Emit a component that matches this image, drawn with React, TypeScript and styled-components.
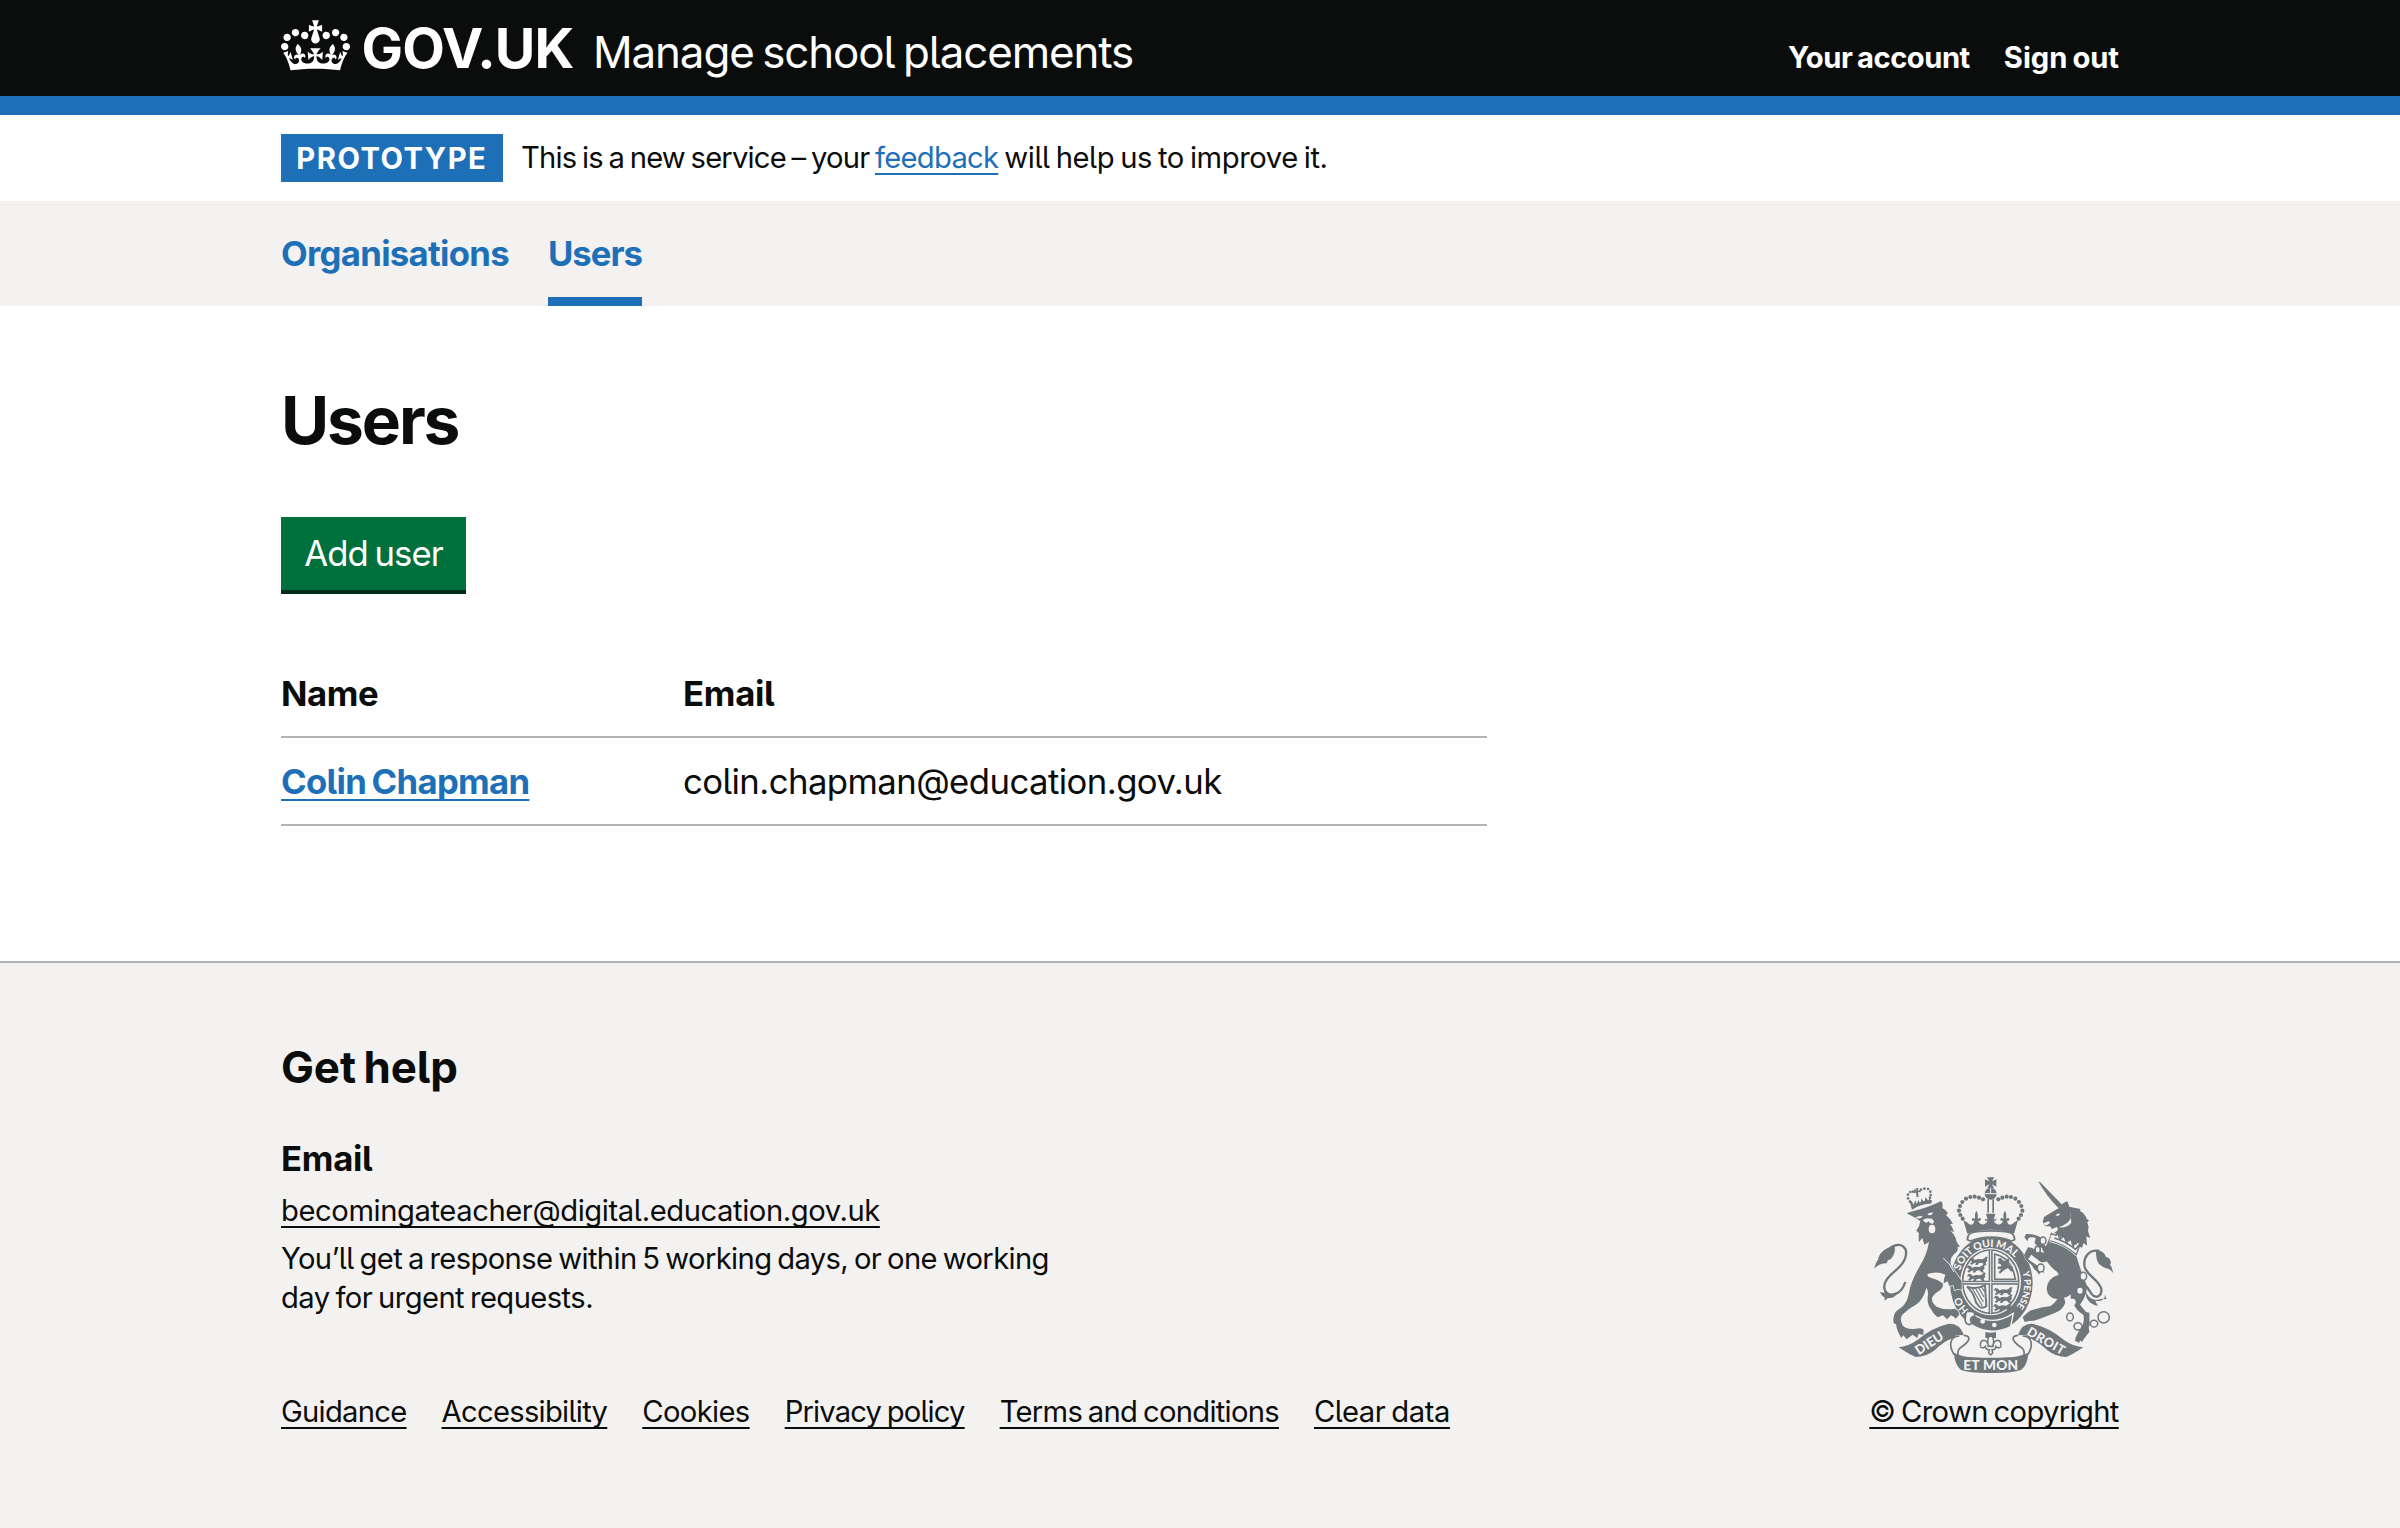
import React from "react";
import styled, { createGlobalStyle, css } from "styled-components";

const colour = {
  black: "#0b0c0c",
  white: "#ffffff",
  blue: "#1d70b8",
  green: "#00703c",
  greenShadow: "#002d18",
  grey: "#f3f2f1",
  border: "#b1b4b6",
  arms: "#6f777b",
};

const GlobalStyle = createGlobalStyle`
  *, *::before, *::after { box-sizing: border-box; word-spacing: -0.06em; }
  body {
    margin: 0;
    background: ${colour.white};
    color: ${colour.black};
    font-family: Inter, "Liberation Sans", sans-serif;
    font-feature-settings: "cv05";
    -webkit-font-smoothing: antialiased;
  }
`;

const smallText = css`
  font-size: 29.2px;
  line-height: 38.3px;
`;

const bodyText = css`
  font-size: 34.7px;
  line-height: 47.9px;
`;

const Page = styled.div`
  min-height: 1528px;
  display: flex;
  flex-direction: column;
`;

const Container = styled.div`
  width: 1838px;
  margin: 0 auto;
`;

const Tracked = styled.span<{ $ls: number }>`
  letter-spacing: ${(p) => p.$ls}px;
  white-space: nowrap;
`;

/* Header */

const Header = styled.header`
  height: 115px;
  background: ${colour.black};
  border-bottom: 19px solid ${colour.blue};
  color: ${colour.white};
`;

const HeaderRow = styled(Container)`
  display: flex;
  align-items: flex-start;
`;

const Crown = styled.svg`
  width: 69px;
  height: 51px;
  margin-top: 20px;
`;

const LogoText = styled.span`
  margin: 28px 0 0 11.5px;
  width: 217px;
  font-size: 55.4px;
  line-height: 40px;
  font-weight: 700;
  letter-spacing: -0.8px;
`;

const ServiceName = styled.span`
  margin: 29px 0 0 14.5px;
  font-size: 43.9px;
  line-height: 46px;
`;

const AccountNav = styled.nav`
  display: flex;
  gap: 34px;
  margin: 38.6px 0 0 auto;
  font-weight: 700;
  ${smallText}
`;

/* Phase banner */

const PhaseBanner = styled(Container)`
  display: flex;
  align-items: center;
  gap: 18px;
  height: 86px;
  ${smallText}
`;

const PhaseText = styled.span`
  padding-top: 1px;
  white-space: nowrap;
`;

const Tag = styled.strong`
  width: 222px;
  height: 48px;
  padding: 2px 0 0 15.3px;
  background: ${colour.blue};
  color: ${colour.white};
  line-height: 46px;
  letter-spacing: 1.5px;
`;

const Link = styled.a<{ $ls: number; $tone?: "blue" | "black"; $bold?: boolean }>`
  color: ${(p) => (p.$tone === "blue" ? colour.blue : colour.black)};
  font-weight: ${(p) => (p.$bold ? 700 : 400)};
  letter-spacing: ${(p) => p.$ls}px;
  white-space: nowrap;
  text-decoration: underline;
  text-decoration-thickness: 2px;
  text-underline-offset: 5px;
  text-decoration-skip-ink: none;
`;

/* Primary navigation */

const PrimaryNav = styled.nav`
  height: 105px;
  background: ${colour.grey};
`;

const NavList = styled(Container)`
  display: flex;
  gap: 39px;
`;

const NavItem = styled.a<{ $active?: boolean; $ls: number }>`
  ${bodyText}
  height: 105px;
  padding-top: 28.8px;
  color: ${colour.blue};
  font-weight: 700;
  letter-spacing: ${(p) => p.$ls}px;
  border-bottom: ${(p) => (p.$active ? `9px solid ${colour.blue}` : "0")};
`;

/* Main */

const Main = styled(Container)`
  height: 655px;
  padding-top: 76px;
`;

const Title = styled.h1`
  margin: 0 0 58.4px;
  font-size: 65.8px;
  line-height: 76.6px;
  font-weight: 700;
  letter-spacing: -2.1px;
`;

const Button = styled.button`
  ${bodyText}
  display: block;
  width: 185px;
  height: 72.6px;
  padding: 1px 0 0;
  border: 0;
  background: ${colour.green};
  box-shadow: 0 4px 0 ${colour.greenShadow};
  color: ${colour.white};
  font-family: inherit;
  font-feature-settings: inherit;
  letter-spacing: -0.93px;
`;

const Table = styled.div`
  width: 1206px;
  margin-top: 60.6px;
`;

const Row = styled.div<{ $head?: boolean }>`
  ${bodyText}
  display: grid;
  grid-template-columns: 402px 1fr;
  padding: 19.6px 0 18.6px;
  border-bottom: 2px solid ${colour.border};
  font-weight: ${(p) => (p.$head ? 700 : 400)};
`;

/* Footer */

const Footer = styled.footer`
  flex: 1;
  padding-top: 76.2px;
  border-top: 2px solid ${colour.border};
  background: ${colour.grey};
`;

const FooterRow = styled(Container)`
  display: flex;
  justify-content: space-between;
  align-items: flex-end;
`;

const FooterMain = styled.div`
  ${smallText}
`;

const HelpTitle = styled.h2`
  margin: 0 0 38.3px;
  font-size: 43.9px;
  line-height: 57.4px;
  font-weight: 700;
  letter-spacing: -0.1px;
`;

const HelpSubtitle = styled.h3`
  ${bodyText}
  margin: 0;
  font-weight: 700;
`;

const HelpText = styled.p`
  margin: 9.6px 0 0;
`;

const FooterLinks = styled.div`
  display: flex;
  gap: 35px;
  margin-top: 76.4px;
`;

const Copyright = styled.div`
  ${smallText}
  width: 250px;
  display: flex;
  flex-direction: column;
  align-items: center;
  gap: 19px;
`;

const ArmsSvg = styled.svg`
  width: 240px;
  height: 197px;
`;

const ArmsText = styled.text`
  font-family: Lato, sans-serif;
  font-weight: 900;
  word-spacing: 0;
`;

function CrownLogo() {
  return (
    <Crown viewBox="0 0 132 97" fill="currentColor">
      <path
        fillRule="evenodd"
        d="M25 30.2c3.5 1.5 7.7-.2 9.1-3.7 1.5-3.6-.2-7.8-3.9-9.2-3.6-1.4-7.6.3-9.1 3.9-1.4 3.5.3 7.5 3.9 9zM9 39.5c3.6 1.5 7.8-.2 9.2-3.7 1.5-3.6-.2-7.8-3.9-9.1-3.6-1.5-7.6.2-9.1 3.8-1.4 3.5.3 7.5 3.8 9zM4.4 57.2c3.5 1.5 7.7-.2 9.1-3.8 1.5-3.6-.2-7.7-3.9-9.1-3.5-1.5-7.6.3-9.1 3.8-1.4 3.5.3 7.6 3.9 9.1zm38.3-21.4c3.5 1.5 7.7-.2 9.1-3.8 1.5-3.6-.2-7.7-3.9-9.1-3.6-1.5-7.6.3-9.1 3.8-1.3 3.6.4 7.7 3.9 9.1zm64.4-5.6c-3.6 1.5-7.8-.2-9.1-3.7-1.5-3.6.2-7.8 3.8-9.2 3.6-1.4 7.7.3 9.2 3.9 1.3 3.5-.4 7.5-3.9 9zm15.9 9.3c-3.6 1.5-7.7-.2-9.1-3.7-1.5-3.6.2-7.8 3.7-9.1 3.6-1.5 7.7.2 9.2 3.8 1.5 3.5-.3 7.5-3.8 9zm4.7 17.7c-3.6 1.5-7.8-.2-9.2-3.8-1.5-3.6.2-7.7 3.9-9.1 3.6-1.5 7.7.3 9.2 3.8 1.3 3.5-.4 7.6-3.9 9.1zM89.3 35.8c-3.6 1.5-7.8-.2-9.2-3.8-1.4-3.6.2-7.7 3.9-9.1 3.6-1.5 7.7.3 9.2 3.8 1.4 3.6-.3 7.7-3.9 9.1zM69.7 17.7l8.9 4.7V9.3l-8.9 2.8c-.2-.3-.5-.6-.9-.9L72.4 0H59.6l3.5 11.2c-.3.3-.6.5-.9.9l-8.8-2.8v13.1l8.8-4.7c.3.3.6.7.9.9l-5 15.4v.1c-.2.8-.4 1.6-.4 2.4 0 4.1 3.1 7.5 7 8.1h.2c.3 0 .7.1 1 .1.4 0 .7 0 1-.1h.2c4-.6 7.1-4.1 7.1-8.1 0-.8-.1-1.7-.4-2.4V34l-5.1-15.4c.4-.2.7-.6 1-.9zM66 92.8c16.9 0 32.8 1.1 47.1 3.2 4-16.9 8.9-26.7 14-33.5l-9.6-3.4c1 4.9 1.1 7.2 0 10.2-1.5-1.4-3-4.3-4.2-8.7L108.6 76c2.8-2 5-3.2 7.5-3.3-4.4 9.4-10 11.9-13.6 11.2-4.3-.8-6.3-4.6-5.6-7.9 1-4.7 5.7-5.9 8-.5 4.3-8.7-3-11.4-7.6-8.8 7.1-7.2 7.9-13.5 2.1-21.1-8 6.1-8.1 12.3-4.5 20.8-4.7-5.4-12.1-2.5-9.5 6.2 3.4-5.2 7.9-2 7.2 3.1-.6 4.3-6.4 7.8-13.5 7.2-10.3-.9-10.9-8-11.2-13.8 2.5-.5 7.1 1.8 11 7.3L80.2 60c-4.1 4.4-8 5.3-12.3 5.4 1.4-4.4 8-11.6 8-11.6H55.5s6.4 7.2 7.9 11.6c-4.2-.1-8-1-12.3-5.4l1.4 16.4c3.9-5.5 8.5-7.7 10.9-7.3-.3 5.8-.9 12.8-11.1 13.8-7.2.6-12.9-2.9-13.5-7.2-.7-5 3.8-8.3 7.1-3.1 2.7-8.7-4.6-11.6-9.4-6.2 3.7-8.5 3.6-14.7-4.6-20.8-5.8 7.6-5 13.9 2.2 21.1-4.7-2.6-11.9.1-7.7 8.8 2.3-5.5 7.1-4.2 8.1.5.7 3.3-1.3 7.1-5.7 7.9-3.5.7-9-1.8-13.5-11.2 2.5.1 4.7 1.3 7.5 3.3l-4.7-15.4c-1.2 4.4-2.7 7.2-4.3 8.7-1.1-3-.9-5.3 0-10.2l-9.5 3.4c5 6.9 9.9 16.7 14 33.5 14.8-2.1 30.8-3.2 47.7-3.2z"
      />
    </Crown>
  );
}

const archPearls = [
  [399, 124], [387, 119], [374, 116], [361, 117], [348, 122], [337, 132],
  [330, 144], [327, 158], [331, 171], [338, 182],
];

const lionCrownPearls = [
  [174, 118], [174, 107], [181, 99], [189, 98], [213, 92], [223, 89], [234, 90], [241, 98], [242, 108],
  [180, 128], [240, 116],
];

/* One walking lion of the first and fourth quarters. */
function QuarterLion({ x, y }: { x: number; y: number }) {
  return (
    <path
      transform={`translate(${x} ${y})`}
      d="M4 2l8 2 4 5 10-3 12 1 8-4 5-5 5 4-4 3 2 6-5 6 3 8-8-2-5-6-10 1-4 6-8-1 4-6-8 2-6 5-5-4 6-5-4-6-6 2z"
    />
  );
}

function RoyalArms() {
  const a = colour.arms;
  const l = colour.grey;
  return (
    <ArmsSvg viewBox="72 57 720 591" fill={a}>
      {/* crown */}
      <path d="M411 58h22l-7 12 13-6v22l-13-7 6 12h-20l6-12-13 7V64l13 6z" />
      <circle cx="422" cy="107" r="18" />
      <path d="M404 107h36M422 89v18" stroke={l} strokeWidth="3" />
      {[...archPearls, ...archPearls.map(([x, y]) => [844 - x, y])].map(([x, y]) => (
        <circle key={`${x}-${y}`} cx={x} cy={y} r="6.2" />
      ))}
      <path d="M412 124h5v40h-5zM427 124h5v40h-5z" />
      <path d="M340 187l11 6c10 12 20 8 22-5-9 3-9-7-4-8 3 0 5 2 5 4 3-8-2-14 5-26 8 12 3 18 5 26 0-2 3-4 6-4 5 2 4 11-5 8 4 15 22 15 27 0-6 2-8-2-7-6l8 3-5-18h28l-5 18 8-3c1 4-1 8-7 6 5 15 23 15 27 0-9 3-10-6-5-8 3 0 6 2 6 4 2-8-3-14 5-26 7 12 2 18 5 26 0-2 2-4 5-4 5 1 5 11-4 8 2 13 12 17 22 5l11-6-12 40q-70-24-140 0z" />

      {/* garter and shield */}
      <ellipse cx="424" cy="376" rx="124" ry="142" />
      <path d="M352 245c0-18 12-22 28-24 30-3 58-3 86 0 16 2 28 6 28 24l-10 4c-36-16-84-16-122 0z" fill={l} stroke={a} strokeWidth="5" />
      <ellipse cx="422" cy="371" rx="91" ry="101" fill={l} />
      <ellipse cx="422" cy="371" rx="84" ry="95" fill={l} stroke={a} strokeWidth="5" />
      <path d="M422 276v190M339 374h166" stroke={a} strokeWidth="12" fill="none" />
      <path d="M422 276v190M339 374h166" stroke={l} strokeWidth="3" fill="none" />
      <QuarterLion x={358} y={297} />
      <QuarterLion x={350} y={320} />
      <QuarterLion x={352} y={345} />
      <QuarterLion x={432} y={388} />
      <QuarterLion x={432} y={411} />
      <QuarterLion x={430} y={436} />
      <path d="M434 288q52 12 62 76h-62z" fill="none" stroke={a} strokeWidth="5" />
      <path d="M444 302l9-3 5 8 8 2 8-8 5 5-6 9 8 10 8 1-3 8 8 8-12-2-8-10-12 7-12 10-4-5 8-8-10-1-2-7 12-1-2-7-9-2 3-5z" />
      <path d="M351 386c20 8 38 3 54-4l4 62c-18 16-32-8-36-26-4-14-12-22-22-32z" fill="none" stroke={a} strokeWidth="6" />
      <path d="M366 390l31 54M376 390l24 42M386 389l16 28M395 386l9 16" stroke={a} strokeWidth="3.5" />
      <path id="garterTop" d="M330 338A98 104 0 0 1 516 338" fill="none" />
      <path id="garterRight" d="M517 342A98 105 0 0 1 466 472" fill="none" />
      <path id="garterLeft" d="M357 456A98 105 0 0 1 325 376" fill="none" />
      <ArmsText fontSize="31" fill={l}>
        <textPath href="#garterTop">SOIT QUI MAL</textPath>
      </ArmsText>
      <ArmsText fontSize="28" fill={l}>
        <textPath href="#garterRight">Y PENSE</textPath>
      </ArmsText>
      <ArmsText fontSize="31" fill={l}>
        <textPath href="#garterLeft">HO</textPath>
      </ArmsText>
      <path d="M358 462q66 48 132 4l-8 40q-60 30-118-6z" stroke={l} strokeWidth="4" />
      <circle cx="398" cy="490" r="7" fill={l} />
      <circle cx="433" cy="501" r="7" fill={l} />
      <path d="M362 460q14 0 12 14-14 2-12 14 6 10-4 12-16-4-12-20 0-14 4-20z" fill={l} stroke={a} strokeWidth="5" />

      {/* lion */}
      <path
        stroke={l}
        strokeWidth="4"
        paintOrder="stroke"
        d="M170 166q12-6 24-8 38-8 78-28 8 2 5 20 10 4 17 16l-6 5q12 10 21 26l-9 1q8 8 12 24l-11-4q12 10 16 22 0 10 13 26l-8 1q6 10-10 22-14 14-9 32 14 24 32 48v26l-12-2-9 4-4-15-12 2-5-14-12 6q0-14 5-26-24-12-54-2 0 8 6 10 28 8 40 18 4 12-10 22-18 10-22 22-2 14 14 26 24 12 54 6 12 4 14 18l-11 12q-6-8-14-10l-12 12-12-12-16 6q-12-8-20-24-12-16-10-36 4-20-4-28-8 32-28 48-26 14-44 32-10 14 2 34 14 12 38 8 20-4 24 4l-1 15-14-4-4 13-14-10-18 14-10-12-6 8q-14-22-16-42l-7-2q-4-28 12-40 28-14 34-52 6-36 36-86 18-30 24-66l-14 8-6-20-10 12q-2-14 0-26l-8-8q10-12 12-28l-10-8z"
      />
      <path d="M196 179q10-8 22-4-4 8-14 6zM232 168q8-6 18-4-4 8-14 8zM218 186l12-5 16 1 6 8-4 8q-8 0-12-8-6 6-12 2z" fill={l} />
      <ellipse cx="246" cy="213" rx="10" ry="13" fill={l} />
      <path d="M280 300q20 16 32 42" stroke={l} strokeWidth="3" fill="none" />
      <g transform="translate(0 3)">
        <path d="M186 141q26-16 60-18l-2 10q-30 2-54 16z" />
        <path d="M178 124q10 2 12 14l6-14 4 12q4-6 4-14l7 12q4-8 2-16l10 12 4-16 8 12 5-16 2 24q-28-2-56 18z" />
        <path d="M194 88l6 8-2-9h7l-1 8 8-2v7l-8-1 2 14-6 2-2-14-6 2z" />
        {lionCrownPearls.map(([x, y]) => (
          <circle key={`${x}-${y}`} cx={x} cy={y} r="4" />
        ))}
      </g>
      <path d="M120 270c34-22 58 0 44 34-14 34-52 42-60 74-6 26 14 38 36 28 14-6 20-16 26-34" fill="none" stroke={a} strokeWidth="7" />
      <path d="M72 332q8-24 14-28l-2-2q10-32 50-38 4 22-12 40l-8 2-4 10q-22 0-38 16z" />
      <path d="M90 402l12 2 6-4q4 10 18 10l14-2q-8 14-26 12l-10 8 0-9q-10-5-14-17z" />

      {/* unicorn */}
      <path d="M566 72l4 0 68 70-12 9q-36-36-60-79z" />
      <path d="M652 130l6 16 14 3 20 4-3 5q16 8 22 26l6 3-5 6q6 14 2 26l7 22-12-6 2 28-10-8-5 14q-40-12-84-46 8 0 12-10l-4-6-14 6-6-8-14 0-8-14 4-14q22-14 46-28 6-12 18-17z" />
      <path d="M660 162q12 30-34 46 26 2 38-14" fill={l} />
      <path d="M618 170q8-6 12-2-2 6-10 6zM580 196l16-6 4 5-12 8z" fill={l} />
      <path d="M604 226l14 6 4-8 6 16 10-1 3-8 7 19 10-2 4-7 6 20 10-3 5-6 8 4-12 34q-40-34-82-42z" fill={l} stroke={a} strokeWidth="4" />
      <path d="M613 240q34 10 64 34l14-18M630 238l3 12M650 248l2 12M670 258l0 12" fill="none" stroke={a} strokeWidth="5" />
      <path
        stroke={l}
        strokeWidth="3"
        paintOrder="stroke"
        d="M598 252q48 10 82 44 10 36 24 70 10 18 4 40-6 20-18 34l18 22 10 2 1 38-3 6 2 14-16 20-6 10q-6-8-8 2l-12-4q-4-10 22-48 6-18 2-32-18-10-26-26-14-18-12-36-12 12-20 10l4 16q-8 22-30 30l-40 16-24 8q-16 0-28 4l-6-14q8-10 22-20 32-10 62-14 12-8 20-20-30-4-32-32 2-32 36-42l-4-8q-14-8-32-32-6 4-18 2l-28-22q-6 8-10 14 26 18 38 24l8 4 2 14-4-4-6-6-4 14-8-10q-10-6-14-18-20-14-24-30l12-24q26 4 48 18l-6-16q-18-6-22-16l3-14q-12-4-22 0l-2 10-10-12 5-10q26-2 44 10l2 18 14 8q8-16 12-32z"
      />
      {[[579, 248, 9, 11], [563, 275, 8, 10], [572, 330, 10, 12], [700, 355, 10, 12], [660, 477, 10, 12], [684, 505, 12, 11], [732, 497, 11, 10], [761, 478, 17, 17]].map(
        ([x, y, rx, ry]) => (
          <ellipse key={`${x}-${y}`} cx={x} cy={y} rx={rx} ry={ry} fill={l} stroke={a} strokeWidth="4.5" />
        ),
      )}
      <ellipse cx="690" cy="398" rx="8" ry="9" fill={l} />
      <ellipse cx="668" cy="432" rx="9" ry="10" fill={l} />
      <path d="M748 279c-30-6-50 18-44 48 8 28 44 38 50 66 2 24-18 30-30 14-6-10-12-20-20-26" fill="none" stroke={a} strokeWidth="7" />
      <path d="M738 275q26 4 30 22 12 0 15 18l-3 4q8 12 9 26-10-14-22-14-22-10-26-24-4-18-3-32z" />
      <path d="M704 392q8 30 34 34l20-4 12 2-6-14 0 8q-6 14-28 10 2 6 8 16-24-4-34-24z" />

      {/* scroll and pendant */}
      <path d="M146 568q28-2 56-22 46-38 92-48 34-4 48 34l-14-1q-12-2-18 10-26 6-56 36-26 20-56 20-18-6-52-29z" />
      <path d="M342 532c18 2 18 12 8 22-14 16-30 14-26 38 M328 534c-30 2-32 28-16 56" fill="none" stroke={a} strokeWidth="5" />
      <path d="M700 568q-30-2-58-22-46-38-92-48-34-4-46 34l14-1q12-2 18 10 26 6 56 36 26 20 56 20 18-6 52-29z" />
      <path d="M504 532c-18 2-18 12-8 22 14 16 30 14 26 38 M518 534c30 2 32 28 16 56" fill="none" stroke={a} strokeWidth="5" />
      <path d="M311 584q24 12 60 14 52 3 104 0 34-2 60-14-2 38-22 52-28 10-90 9-62 1-90-9-18-14-22-52z" />
      <ArmsText transform="translate(206 592) rotate(-33)" fontSize="39" fill={l}>DIEU</ArmsText>
      <ArmsText transform="translate(528 529) rotate(30)" fontSize="38" fill={l} letterSpacing="1.5">DROIT</ArmsText>
      <ArmsText x="340" y="635" fontSize="41" fill={l} textLength="164">ET MON</ArmsText>
      <path d="M406 522q16 5 32 0v18h-32z" />
      <g transform="translate(0 -9)">
        <path
          d="M422 540q14 12 6 34 4-18 16-18 12 4 8 20-8 6-14-2-2 12-12 10l2 10-6 6-6-6 2-10q-10 2-12-10-6 8-14 2-4-16 8-20 12 0 16 18-8-22 6-34z"
          fill={l}
          stroke={a}
          strokeWidth="4.5"
        />
        <path d="M412 574h20" stroke={a} strokeWidth="5" />
      </g>
    </ArmsSvg>
  );
}

const footerLinks: [string, number][] = [
  ["Guidance", -0.72],
  ["Accessibility", -0.71],
  ["Cookies", -0.64],
  ["Privacy policy", -0.84],
  ["Terms and conditions", -0.71],
  ["Clear data", -0.45],
];

export default function App() {
  return (
    <Page>
      <GlobalStyle />
      <Header>
        <HeaderRow>
          <CrownLogo />
          <LogoText>GOV.UK</LogoText>
          <ServiceName>
            <Tracked $ls={-1.12}>Manage school placements</Tracked>
          </ServiceName>
          <AccountNav>
            <Tracked $ls={-0.48}>Your account</Tracked>
            <Tracked $ls={-0.05}>Sign out</Tracked>
          </AccountNav>
        </HeaderRow>
      </Header>
      <PhaseBanner>
        <Tag>PROTOTYPE</Tag>
        <PhaseText>
          <Tracked $ls={-0.81}>This is a new service – your </Tracked>
          <Link $ls={-0.72} $tone="blue">feedback</Link>
          <Tracked $ls={-0.43}> will help us to improve it.</Tracked>
        </PhaseText>
      </PhaseBanner>
      <PrimaryNav>
        <NavList>
          <NavItem $ls={-0.7}>Organisations</NavItem>
          <NavItem $ls={-1} $active>Users</NavItem>
        </NavList>
      </PrimaryNav>
      <Main as="main">
        <Title>Users</Title>
        <Button>Add user</Button>
        <Table>
          <Row $head>
            <Tracked $ls={-0.4}>Name</Tracked>
            <Tracked $ls={-0.3}>Email</Tracked>
          </Row>
          <Row>
            <div><Link $ls={-0.7} $tone="blue" $bold>Colin Chapman</Link></div>
            <Tracked $ls={-0.56}>colin.chapman@education.gov.uk</Tracked>
          </Row>
        </Table>
      </Main>
      <Footer>
        <FooterRow>
          <FooterMain>
            <HelpTitle>Get help</HelpTitle>
            <HelpSubtitle><Tracked $ls={-0.3}>Email</Tracked></HelpSubtitle>
            <HelpText><Link $ls={-0.42}>becomingateacher@digital.education.gov.uk</Link></HelpText>
            <HelpText>
              <Tracked $ls={-0.63}>You’ll get a response within 5 working days, or one working</Tracked>
              <br />
              <Tracked $ls={-0.57}>day for urgent requests.</Tracked>
            </HelpText>
            <FooterLinks>
              {footerLinks.map(([label, ls]) => (
                <Link key={label} $ls={ls}>{label}</Link>
              ))}
            </FooterLinks>
          </FooterMain>
          <Copyright>
            <RoyalArms />
            <Link $ls={-0.66}>© Crown copyright</Link>
          </Copyright>
        </FooterRow>
      </Footer>
    </Page>
  );
}
